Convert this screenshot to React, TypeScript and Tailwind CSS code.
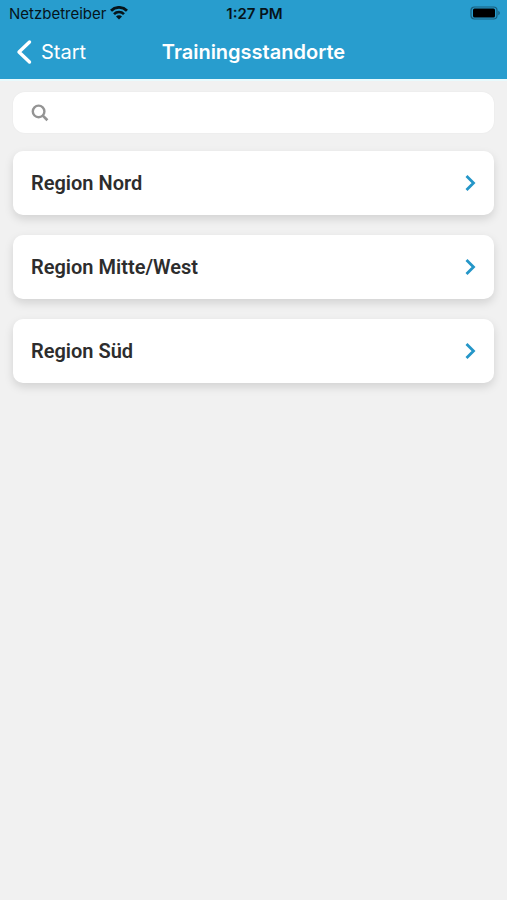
import React from "react";

interface Region {
  id: string;
  name: string;
}

const regions: Region[] = [
  { id: "nord", name: "Region Nord" },
  { id: "mitte-west", name: "Region Mitte/West" },
  { id: "sued", name: "Region Süd" },
];

const WifiIcon = () => (
  <svg width="18" height="16" viewBox="0 0 18 16" fill="none" aria-hidden="true">
    <path d="M1 4.7a11.4 11.4 0 0 1 16 0" stroke="#06141a" strokeWidth="2.9" />
    <path d="M4 8.1a7.1 7.1 0 0 1 10 0" stroke="#06141a" strokeWidth="2.6" />
    <path d="M9 13.6 6 10.6a4.2 4.2 0 0 1 6 0z" fill="#06141a" />
  </svg>
);

const BatteryIcon = () => (
  <svg width="30" height="16" viewBox="0 0 30 16" fill="none" aria-hidden="true">
    <rect x="1" y="1" width="26" height="12" rx="3.5" stroke="#06141a" strokeOpacity="0.45" strokeWidth="1.2" />
    <rect x="3" y="2.5" width="22" height="9" rx="1.5" fill="#000" />
    <path d="M28.3 4.8c2 .9 2 3.5 0 4.4z" fill="#06141a" fillOpacity="0.45" />
  </svg>
);

const StatusBar = () => (
  <div className="grid h-7 grid-cols-[1fr_auto_1fr] items-center pr-[7px] pl-[9px] text-[15px] text-[#06141a]">
    <div className="flex items-center gap-1">
      <span>Netzbetreiber</span>
      <WifiIcon />
    </div>
    <span className="font-semibold">1:27 PM</span>
    <div className="flex justify-end">
      <BatteryIcon />
    </div>
  </div>
);

const NavBar = () => (
  <div className="grid h-12 grid-cols-[1fr_auto_1fr] items-center px-4 text-xl text-white">
    <button type="button" className="flex items-center gap-[9px]">
      <svg width="16" height="26" viewBox="0 0 16 26" fill="none" aria-hidden="true">
        <path d="M13.5 3 3 13l10.5 10" stroke="currentColor" strokeWidth="3.4" strokeLinecap="round" strokeLinejoin="round" />
      </svg>
      <span>Start</span>
    </button>
    <h1 className="font-semibold">Trainingsstandorte</h1>
  </div>
);

const SearchBar = () => (
  <label className="flex h-[41px] items-center rounded-xl bg-white px-[18px] shadow-[0_0_2px_rgba(0,0,0,0.05)]">
    <svg width="18" height="18" viewBox="0 0 18 18" fill="none" className="shrink-0" aria-hidden="true">
      <circle cx="7.6" cy="7.4" r="5.8" stroke="#949494" strokeWidth="2.4" />
      <path d="m11.8 11.6 4.6 4.6" stroke="#949494" strokeWidth="2.7" />
    </svg>
    <input type="search" aria-label="Suche" className="ml-3 w-full min-w-0 bg-transparent text-lg outline-none" />
  </label>
);

const RegionCard: React.FC<{ name: string }> = ({ name }) => (
  <button
    type="button"
    className="flex h-16 w-full items-center justify-between rounded-[10px] bg-white px-[18px] text-left shadow-[0_4px_10px_rgba(0,0,0,0.13)]"
  >
    <span className="text-xl leading-6 font-semibold text-[#2d2d2d]">{name}</span>
    <svg width="12" height="18" viewBox="0 0 12 18" fill="none" aria-hidden="true">
      <path d="m2.5 2 7 7-7 7" stroke="#2496c8" strokeWidth="2.8" />
    </svg>
  </button>
);

export default function App() {
  return (
    <div className="min-h-screen bg-[#f1f1f1]">
      <header className="border-b-2 border-[#e8fafd] bg-[#289dce] pb-[3px] font-['Inter',sans-serif]">
        <StatusBar />
        <NavBar />
      </header>

      <main className="px-[13px] pt-[11px] font-['Roboto',sans-serif]">
        <SearchBar />
        <ul className="mt-[18px] flex flex-col gap-5">
          {regions.map((region) => (
            <li key={region.id}>
              <RegionCard name={region.name} />
            </li>
          ))}
        </ul>
      </main>
    </div>
  );
}
